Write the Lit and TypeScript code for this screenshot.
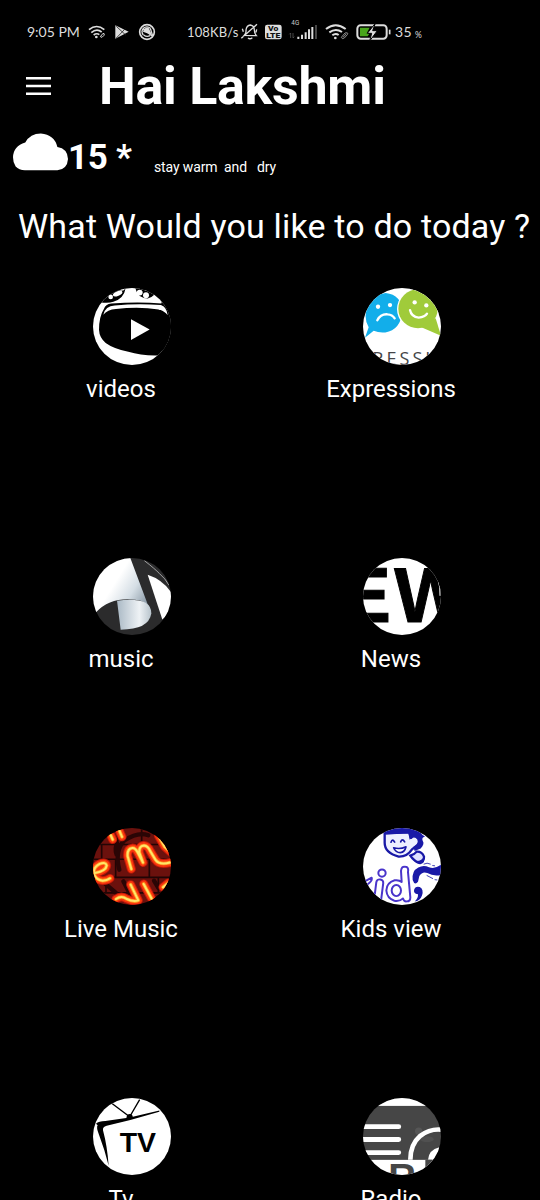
import { LitElement, html, svg, css } from "lit";
import { customElement } from "lit/decorators.js";

const neon = (d: string) => svg`
  <path d=${d} fill="none" stroke="#c01808" stroke-width="27" stroke-linecap="round" stroke-linejoin="round"/>
  <path d=${d} fill="none" stroke="#f8360e" stroke-width="21" stroke-linecap="round" stroke-linejoin="round"/>
  <path d=${d} fill="none" stroke="#ff9420" stroke-width="11" stroke-linecap="round" stroke-linejoin="round"/>
  <path d=${d} fill="none" stroke="#ffe66a" stroke-width="6" stroke-linecap="round" stroke-linejoin="round"/>`;

const videos = svg`
  <rect x="39" y="23" width="234" height="234" fill="#fff"/>
  <path d="M39 23H137Q132 55 100 65Q84 70 60 66Z"/>
  <path d="M166 23H232Q226 50 203 55Q172 53 166 23Z"/>
  <ellipse cx="113" cy="40" rx="15" ry="7" fill="#fff" transform="rotate(-22 113 40)"/>
  <circle cx="92" cy="50" r="7" fill="#fff"/><ellipse cx="125" cy="27" rx="9" ry="4" fill="#fff"/>
  <circle cx="179" cy="37" r="9" fill="#fff"/><circle cx="198" cy="45" r="9" fill="#fff"/><circle cx="200" cy="27" r="5" fill="#fff"/>
  <path d="M72 86Q76 72 94 70Q175 64 245 70L256 80Q265 90 265 106L273 108V228H226Q180 228 145 217Q100 207 77 190Q58 174 57 150Q57 110 72 86Z"/>
  <path d="M70 104Q76 77 104 76Q175 70 242 75Q260 80 263 106Q254 92 236 88Q175 79 108 87Q82 89 70 104Z" fill="#fff"/>
  <path d="M244 66L273 80V210L246 214Z"/>
  <path d="M242 75Q260 80 263 106Q254 92 236 88Z" fill="#fff"/>
  <path d="M153 118L209 149L153 181Z" fill="#fff"/>`;

const expressions = svg`
  <rect x="39" y="23" width="234" height="234" fill="#fff"/>
  <path d="M45 174L56 142Q38 110 55 73Q72 42 107 38Q155 43 157 96Q151 151 106 158Q87 160 71 153Z" fill="#12aeea"/>
  <circle cx="204" cy="87" r="63" fill="#fff"/>
  <circle cx="204" cy="86" r="59" fill="#a0cb3a"/><path d="M214 142L273 168L257 115Z" fill="#a0cb3a"/>
  <circle cx="84" cy="80" r="6.5" fill="#fff"/><circle cx="120" cy="75" r="6.5" fill="#fff"/>
  <path d="M82 121Q92 101 113 103Q127 104 134 115" fill="none" stroke="#fff" stroke-width="7" stroke-linecap="round"/>
  <circle cx="194" cy="67" r="6.5" fill="#fff"/><circle cx="229" cy="76" r="6.5" fill="#fff"/>
  <path d="M180 90Q184 111 206 113Q225 111 231 101" fill="none" stroke="#fff" stroke-width="7" stroke-linecap="round"/>
  <text x="67" y="256" font-family="Open Sans, sans-serif" font-size="54" font-weight="500" fill="#454548" textLength="174">RESSI</text>`;

const music = svg`
  <defs>
    <linearGradient id="paper" x1="0" y1=".2" x2="1" y2=".8"><stop offset=".4" stop-color="#fff"/><stop offset=".7" stop-color="#d5dee5"/><stop offset="1" stop-color="#8797a4"/></linearGradient>
    <linearGradient id="curl"><stop offset="0" stop-color="#aab9c5"/><stop offset=".65" stop-color="#eef2f5"/><stop offset="1" stop-color="#b8c4cc"/></linearGradient>
  </defs>
  <rect x="39" y="23" width="234" height="234" fill="#2b2b2c"/>
  <path d="M39 23H151L207 174Q198 153 165 150Q92 141 48 188L39 180Z" fill="url(#paper)"/>
  <path d="M111 153Q166 145 196 158Q215 170 214 192Q206 241 122 241Z" fill="url(#curl)"/>
  <path d="M203 74L247 210L273 185V126Q246 88 203 74Z" fill="#fff"/>
  <path d="M193 31Q225 56 238 70Q256 85 267 106" fill="none" stroke="#ddd" stroke-width="2"/>`;

const news = svg`
  <rect x="39" y="23" width="234" height="234" fill="#fff"/>
  <g font-family="Liberation Sans, sans-serif" font-weight="700" font-size="235" stroke="#000" stroke-width="3">
    <text x="-34" y="219">E</text>
    <text x="133" y="219" textLength="218" lengthAdjust="spacingAndGlyphs">W</text>
  </g>
  <path d="M265 92Q271 112 270 138" fill="none" stroke="#fff" stroke-width="3"/>`;

const live = svg`
  <rect x="39" y="23" width="234" height="234" fill="#6b110d"/>
  <path d="M39 73H273M39 118H273M39 173H273M39 220H273M65 73V118M113 23V73M107 118V173M208 118V173M185 23V73M78 173V220M235 173V220" stroke="#210505" stroke-width="5" fill="none"/>
  <path d="M118 150Q103 92 133 61Q174 33 205 45M76 193L108 220M130 185L154 231M222 183L235 205M112 70Q103 85 110 104" fill="none" stroke="#2a0505" stroke-width="13" stroke-linecap="round"/>
  ${neon("M88 36L98 58M116 26L126 50")}
  ${neon("M44 160Q78 153 80 137Q77 125 59 132Q38 143 42 164Q49 181 68 183Q83 182 90 176")}
  ${neon("M154 148L143 109Q141 86 157 84Q166 83 174 99L189 128L178 98Q176 77 192 76Q204 77 211 94L226 119Q238 137 270 128")}
  ${neon("M235 46L254 80L274 98")}
  ${neon("M152 195L175 243Q161 249 139 238Q124 227 108 239")}
  ${neon("M191 193L215 238")}
  ${neon("M249 203L265 190")}`;

const kids = svg`
  <rect x="39" y="23" width="234" height="234" fill="#fff"/>
  <path d="M104 39L178 36L183 53Q193 42 204 52Q214 65 201 76L186 88Q171 111 146 110Q104 99 104 68Z" fill="#eef0ff" stroke="#1919a7" stroke-width="7" stroke-linejoin="round"/>
  <path d="M102 23H205Q209 40 225 49Q214 52 218 62Q225 72 212 85L194 93L190 81Q207 73 202 58Q190 44 179 59L175 39L104 43Z" fill="#1919a7"/>
  <path d="M190 54Q205 54 200 65Q195 72 188 69" fill="#eef0ff"/>
  <path d="M123 66Q127 54 134 66M152 65Q157 53 164 65" fill="none" stroke="#1919a7" stroke-width="5" stroke-linecap="round"/>
  <path d="M131 83Q150 89 168 80Q164 97 151 98Q137 98 131 83Z" fill="#fff" stroke="#1919a7" stroke-width="5" stroke-linejoin="round"/>
  <path d="M181 107Q195 102 200 95Q216 94 222 110Q223 127 207 128Q193 125 181 107Z" fill="#dfe1ff" stroke="#1919a7" stroke-width="7"/>
  <path d="M192 123Q216 126 222 109Q227 129 211 133Q201 134 192 123Z" fill="#1919a7"/>
  <g fill="#fff" stroke="#4934cb" stroke-width="6" stroke-linejoin="round" stroke-linecap="round">
    <circle cx="96" cy="160" r="11"/>
    <rect x="76" y="179" width="21" height="67" rx="10" transform="rotate(7 86 212)"/>
    <path d="M43 186L65 174Q68 184 51 195L39 206Z"/>
    <path d="M153 153Q155 138 166 141Q177 142 174 157L181 234Q181 246 170 246Q162 247 159 237Q149 247 133 244Q111 237 109 213Q110 189 134 182Q147 180 155 187Z"/>
    <ellipse cx="139" cy="213" rx="14" ry="17"/>
  </g>
  <path d="M188 181Q185 153 205 143Q220 134 237 142Q253 149 273 135V166Q250 171 232 160Q217 154 208 169L204 186Q194 199 188 181Z" fill="#1919a7"/>
  <path d="M193 208Q197 199 209 202Q222 208 216 228Q210 245 194 246Q205 236 204 224Q188 222 193 208Z" fill="#1919a7"/>
  <path d="M221 133Q231 127 242 133M247 137L255 138M230 167L249 177M254 180L262 181" fill="none" stroke="#1919a7" stroke-width="2.5"/>`;

const tv = svg`
  <rect x="39" y="23" width="234" height="234" fill="#fff"/>
  <path d="M48 101Q56 94 76 93L149 82L238 61V65L151 90L80 107Q67 110 69 121Q82 170 86 229Q74 180 57 135Q48 112 53 106Z"/>
  <path d="M96 40L149 80L179 28" fill="none" stroke="#000" stroke-width="4"/>
  <path d="M139 85Q140 71 151 72Q160 75 158 83Z"/>
  <text x="119" y="187" font-family="Liberation Sans, sans-serif" font-weight="700" font-size="85" textLength="109" lengthAdjust="spacingAndGlyphs">TV</text>`;

const radio = svg`
  <rect x="39" y="23" width="234" height="234" fill="#464646"/>
  <rect x="39" y="23" width="234" height="24" fill="#fff"/>
  <rect x="39" y="211" width="234" height="46" fill="#fff"/>
  <path d="M32 110H146M32 149H146M32 189H146" stroke="#fff" stroke-width="15" stroke-linecap="round"/>
  <circle cx="206" cy="124" r="11" fill="#565656"/><ellipse cx="231" cy="148" rx="20" ry="9" fill="#505050"/>
  <path d="M181 211Q181 164 211 138Q239 116 273 119" fill="none" stroke="#fff" stroke-width="14"/>
  <path d="M234 211Q236 181 268 173V211Z" fill="#fff"/>
  <text x="115" y="302" font-family="Liberation Sans, sans-serif" font-weight="700" font-size="115" fill="#464646">R</text>
  <path d="M226 211H246V230L226 257Z" fill="#464646"/>`;

const items = [
  { label: "videos", art: videos },
  { label: "Expressions", art: expressions },
  { label: "music", art: music },
  { label: "News", art: news },
  { label: "Live Music", art: live },
  { label: "Kids view", art: kids },
  { label: "Tv", art: tv },
  { label: "Radio", art: radio },
];

@customElement("menu-tile")
class MenuTile extends LitElement {
  static properties = { label: {}, art: { attribute: false } };
  declare label: string;
  declare art: unknown;
  static styles = css`
    :host { display: flex; flex-direction: column; align-items: center; height: 270px; }
    .avatar { display: block; width: 78px; height: 77px; margin-right: 6px; border-radius: 50%; flex: none; }
    .label { margin: 8px 28px 0 0; font-size: 24px; line-height: 32px; white-space: nowrap; }
  `;
  render() {
    return html`
      <svg class="avatar" viewBox="39 23 234 234" preserveAspectRatio="none">${this.art}</svg>
      <div class="label">${this.label}</div>`;
  }
}

@customElement("status-bar")
class StatusBar extends LitElement {
  static styles = css`
    :host { display: flex; align-items: center; height: 45px; padding: 10px 0 0 27px; color: #ddd;
      font-family: Lato, "Open Sans", sans-serif; font-size: 14px; white-space: pre; box-sizing: content-box; }
    .time, .rate, .level { padding-bottom: 2px; }
    .time { width: 60px; }
    .left { width: 73px; height: 45px; margin-right: 27px; flex: none; }
    .rate { width: 52px; font-size: 13px; letter-spacing: 0.1px; }
    .right { width: 154px; height: 45px; flex: none; }
    .level { width: 22px; font-size: 14px; letter-spacing: 0.5px; padding-left: 2px; box-sizing: border-box; }
    .percent { font-size: 8.5px; padding-top: 4px; }
  `;
  render() {
    return html`
      <span class="time">9:05 PM</span>
      <svg class="left" viewBox="261 0 219 135" fill="none" stroke="#ddd" stroke-width="5">
        <path d="M267 59Q290 40 313 59M274 68Q290 54 305 66M281 75Q290 68 298 74"/>
        <circle cx="289" cy="81" r="4" fill="#ddd" stroke="none"/>
        <path d="M301 80L309 70Q315 70 312 76L306 82Z" stroke-width="3"/>
        <path d="M346 46L386 65L346 86Z" fill="#ddd" stroke="none"/>
        <path d="M349 49L378 76M376 56L349 84" stroke="#222" stroke-width="2.5"/>
        <circle cx="441" cy="66" r="22"/>
        <path d="M430 75A14 14 0 0 1 451 55M451 55L458 78M430 57L456 78M431 75Q440 82 450 77" stroke-width="4"/>
        <path d="M429 65Q433 51 446 53L456 75Z" fill="#ddd" stroke="none"/>
      </svg>
      <span class="rate">108KB/s</span>
      <svg class="right" viewBox="57 0 462 135" fill="none" stroke="#ddd" stroke-width="4">
        <path d="M73 76Q79 70 78 60Q80 46 91 45Q103 47 103 60Q103 70 109 77ZM84 84Q90 89 97 83M64 85L111 43M67 56L70 65M110 58L108 67"/>
        <rect x="135" y="44" width="50" height="44" rx="7" fill="#ddd" stroke="none"/>
        <g font-family="Roboto, sans-serif" font-weight="900" fill="#111" stroke="none">
          <text x="144" y="64" font-size="22" textLength="31" lengthAdjust="spacingAndGlyphs">Vo</text>
          <text x="139" y="84" font-size="22" textLength="42" lengthAdjust="spacingAndGlyphs">LTE</text>
        </g>
        <text x="214" y="46" font-size="19" fill="#ccc" stroke="none" font-family="Roboto, sans-serif">4G</text>
        <path d="M235 87V80M246 87V74M257 87V67M267 87V58M277 87V51" stroke-width="6"/>
        <path d="M288 87V45" stroke="#555" stroke-width="5"/>
        <path d="M212 69V84M208 73L212 69M219 69V84M223 80L219 84" stroke="#666" stroke-width="2"/>
        <path d="M318 57Q347 34 377 57M328 67Q347 53 366 66M337 76Q347 68 356 75" stroke-width="6"/>
        <circle cx="346" cy="84" r="4" fill="#ddd" stroke="none"/>
        <path d="M364 82L375 69Q386 66 382 74L373 84Q366 89 364 82ZM369 82L379 71" stroke-width="2.5" stroke="#aaa"/>
        <rect x="412" y="46" width="88" height="40" rx="10" stroke-width="6"/>
        <path d="M420 53H449L440 70H449L443 79H420Z" fill="#48a51b" stroke="none"/>
        <path d="M466 40L442 70H455L449 93L472 62H458Z" fill="#ddd" stroke="#000" stroke-width="3"/>
        <path d="M509 59V73" stroke-width="5"/>
      </svg>
      <span class="level">35</span><span class="percent">%</span>`;
  }
}

@customElement("app-root")
class AppRoot extends LitElement {
  static styles = css`
    :host { display: block; width: 540px; height: 1200px; overflow: hidden; background: #000; color: #fff;
      font-family: Roboto, sans-serif; }
    .header { display: flex; align-items: center; height: 62px; padding-left: 26px; }
    .menu { width: 25px; height: 18px; margin-right: 48px; flex: none; }
    .title { padding-top: 2px; font-size: 52px; line-height: 60px; font-weight: 700; letter-spacing: -0.27px; white-space: nowrap; }
    .weather { display: flex; align-items: flex-start; height: 56px; padding: 16px 0 0 13px; box-sizing: border-box; }
    .cloud { width: 55px; height: 38px; flex: none; }
    .temp { width: 86px; font-size: 35px; line-height: 40px; font-weight: 700; letter-spacing: -0.3px; white-space: nowrap; margin-top: 5px; }
    .note { margin-top: 25px; font-size: 14px; line-height: 18px; letter-spacing: -0.13px; white-space: pre; }
    .question { height: 115px; padding: 33px 0 0 18px; box-sizing: border-box; font-size: 34px; line-height: 40px;
      letter-spacing: 0.17px; white-space: nowrap; }
    .grid { display: grid; grid-template-columns: 270px 270px; }
  `;
  render() {
    return html`
      <status-bar></status-bar>
      <header class="header">
        <svg class="menu" viewBox="0 0 25 18"><path d="M0 1.3H25M0 9H25M0 16.7H25" stroke="#fff" stroke-width="2.6"/></svg>
        <span class="title">Hai Lakshmi</span>
      </header>
      <div class="weather">
        <svg class="cloud" viewBox="38 220 166 112"><path d="M74 331Q56 331 46 320Q38 309 38 292Q39 257 75 247Q90 220 122 220Q163 223 172 261Q203 266 204 297Q202 328 172 331Z" fill="#fff"/></svg>
        <span class="temp">15 *</span>
        <span class="note">stay warm  and   dry</span>
      </div>
      <div class="question">What Would you like to do today ?</div>
      <main class="grid">
        ${items.map((i) => html`<menu-tile .label=${i.label} .art=${i.art}></menu-tile>`)}
      </main>`;
  }
}
